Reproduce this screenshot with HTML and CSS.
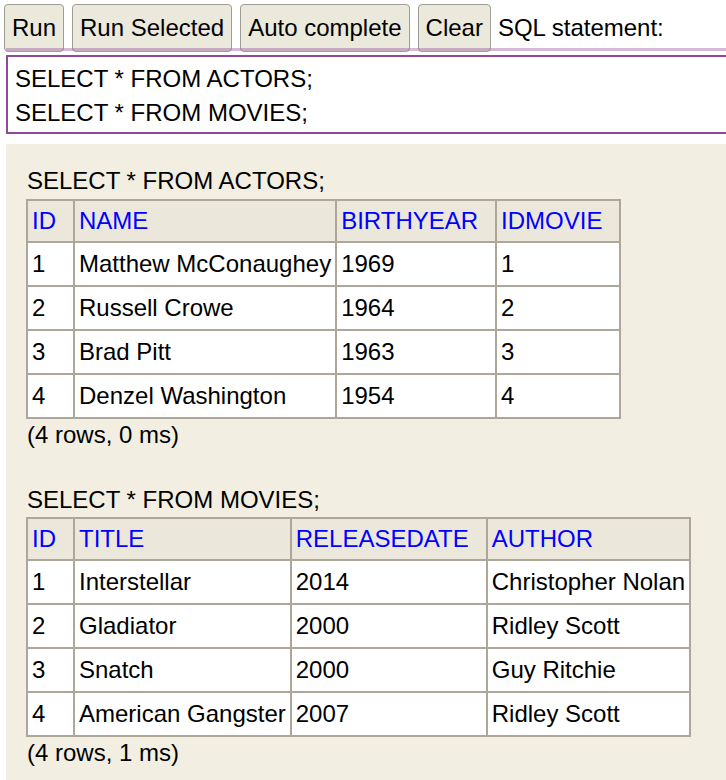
FILE: index.html
```html
<!DOCTYPE html>
<html>
<head>
<meta charset="utf-8">
<title>H2 Console</title>
<link rel="stylesheet" href="styles.css">
</head>
<body>
<div class="toolbar">
  <button class="btn">Run</button>
  <button class="btn">Run Selected</button>
  <button class="btn">Auto complete</button>
  <button class="btn">Clear</button>
  <span class="label">SQL statement:</span>
</div>
<div class="editor">
  <textarea class="sql" spellcheck="false">SELECT * FROM ACTORS;
SELECT * FROM MOVIES;</textarea>
</div>
<div class="result">
  <div class="line">SELECT * FROM ACTORS;</div>
  <table class="grid">
    <tr><th>ID</th><th>NAME</th><th>BIRTHYEAR</th><th>IDMOVIE</th></tr>
    <tr><td>1</td><td>Matthew McConaughey</td><td>1969</td><td>1</td></tr>
    <tr><td>2</td><td>Russell Crowe</td><td>1964</td><td>2</td></tr>
    <tr><td>3</td><td>Brad Pitt</td><td>1963</td><td>3</td></tr>
    <tr><td>4</td><td>Denzel Washington</td><td>1954</td><td>4</td></tr>
  </table>
  <div class="line">(4 rows, 0 ms)</div>
  <div class="line blank"></div>
  <div class="line">SELECT * FROM MOVIES;</div>
  <table class="grid">
    <tr><th>ID</th><th>TITLE</th><th>RELEASEDATE</th><th>AUTHOR</th></tr>
    <tr><td>1</td><td>Interstellar</td><td>2014</td><td>Christopher Nolan</td></tr>
    <tr><td>2</td><td>Gladiator</td><td>2000</td><td>Ridley Scott</td></tr>
    <tr><td>3</td><td>Snatch</td><td>2000</td><td>Guy Ritchie</td></tr>
    <tr><td>4</td><td>American Gangster</td><td>2007</td><td>Ridley Scott</td></tr>
  </table>
  <div class="line">(4 rows, 1 ms)</div>
</div>
</body>
</html>
```
FILE: styles.css
```css
html, body {
  margin: 0;
  padding: 0;
  background: #ffffff;
  overflow: hidden;
  width: 726px;
  height: 780px;
}
body {
  font-family: "Liberation Sans", Arial, sans-serif;
  font-size: 24px;
  color: #000000;
}
.toolbar {
  display: flex;
  align-items: center;
  gap: 8px;
  padding: 4px 0 0 4px;
  height: 48px;
}
.btn {
  font-family: "Liberation Sans", Arial, sans-serif;
  font-size: 24px;
  color: #000000;
  height: 48px;
  padding: 0 7px;
  margin: 0;
  border: 1px solid #9f9d94;
  border-radius: 4px;
  background: #ebe9dc;
  line-height: 28px;
}
.label {
  margin-left: -1px;
  white-space: nowrap;
}
.editor {
  position: relative;
  margin: 3px 0 0 6px;
}
.editor::before {
  content: "";
  position: absolute;
  left: 0;
  right: 0;
  top: -7px;
  height: 3px;
  background: rgba(142, 74, 150, 0.38);
}
.sql {
  display: block;
  box-sizing: border-box;
  width: 720px;
  height: 79px;
  margin: 0;
  padding: 5px 7px 2px 7px;
  border: 2px solid #8e4a96;
  border-right: none;
  border-radius: 0;
  outline: none;
  resize: none;
  overflow: hidden;
  font-family: "Liberation Sans", Arial, sans-serif;
  font-size: 24px;
  line-height: 34px;
  color: #000000;
  background: #ffffff;
}
.result {
  box-sizing: border-box;
  margin: 10px 0 0 6px;
  height: 636px;
  background: #f2efe2;
  padding: 21px 20px 0 20px;
}
.line {
  line-height: 32.5px;
  height: 32.5px;
  padding-left: 1px;
  white-space: nowrap;
}
.grid {
  border-collapse: collapse;
  margin-top: 1px;
  border: 2px solid #aca798;
}
.grid th,
.grid td {
  border: 2px solid #aca798;
  text-align: left;
  white-space: nowrap;
  line-height: 28px;
  font-weight: normal;
}
.grid th {
  background: #ebe8db;
  color: #0000ff;
  padding: 6px 17px 6px 4px;
}
.grid td {
  background: #ffffff;
  padding: 7px 4px 7px 4px;
}
```
